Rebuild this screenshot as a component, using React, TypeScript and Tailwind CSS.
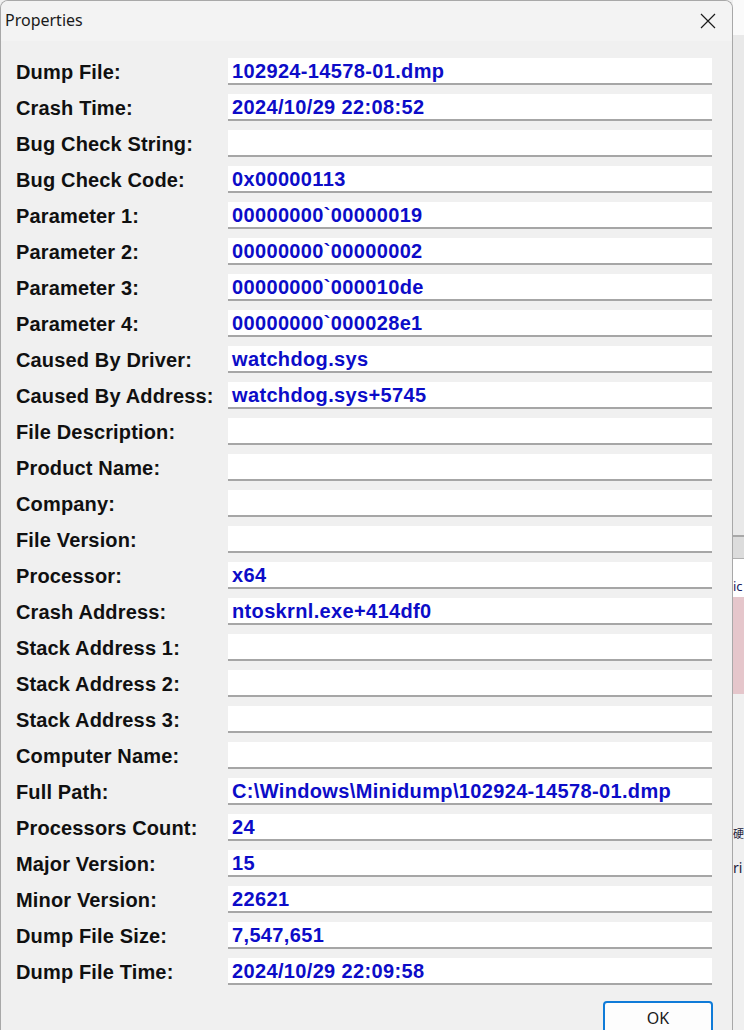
import React from "react";

const rows: [string, string][] = [
  ["Dump File:", "102924-14578-01.dmp"],
  ["Crash Time:", "2024/10/29 22:08:52"],
  ["Bug Check String:", ""],
  ["Bug Check Code:", "0x00000113"],
  ["Parameter 1:", "00000000`00000019"],
  ["Parameter 2:", "00000000`00000002"],
  ["Parameter 3:", "00000000`000010de"],
  ["Parameter 4:", "00000000`000028e1"],
  ["Caused By Driver:", "watchdog.sys"],
  ["Caused By Address:", "watchdog.sys+5745"],
  ["File Description:", ""],
  ["Product Name:", ""],
  ["Company:", ""],
  ["File Version:", ""],
  ["Processor:", "x64"],
  ["Crash Address:", "ntoskrnl.exe+414df0"],
  ["Stack Address 1:", ""],
  ["Stack Address 2:", ""],
  ["Stack Address 3:", ""],
  ["Computer Name:", ""],
  ["Full Path:", "C:\\Windows\\Minidump\\102924-14578-01.dmp"],
  ["Processors Count:", "24"],
  ["Major Version:", "15"],
  ["Minor Version:", "22621"],
  ["Dump File Size:", "7,547,651"],
  ["Dump File Time:", "2024/10/29 22:09:58"],
];

export default function App() {
  return (
    <div className="w-[744px] h-[1030px] flex overflow-hidden bg-[#f0f0f0]">
      {/* Dialog */}
      <div className="w-[733px] h-[1030px] shrink-0 flex flex-col border-t border-l border-r border-[#a8a8a8] rounded-t-[8px] overflow-hidden bg-[#f0f0f0]">
        <div className="h-[40px] shrink-0 flex items-center justify-between bg-[#f3f3f3]">
          <span className="pl-[4px] text-[16px] text-[#1a1a1a] font-['Noto_Sans',sans-serif] leading-none pb-[2px]">
            Properties
          </span>
          <div className="w-[48px] h-[40px] flex items-center justify-center">
            <svg width="16" height="16" viewBox="0 0 16 16">
              <path d="M1 1 L15 15 M15 1 L1 15" stroke="#1a1a1a" strokeWidth="1.2" fill="none" />
            </svg>
          </div>
        </div>
        <div className="flex-1 flex flex-col pt-[17px] font-['Liberation_Sans',Arial,sans-serif] font-bold text-[20px]">
          {rows.map(([label, value]) => (
            <div key={label} className="h-[36px] shrink-0 flex items-start">
              <div className="w-[227px] h-[27px] pl-[15px] flex items-center text-[#101010] whitespace-nowrap tracking-[0.15px]">
                {label}
              </div>
              <div className="w-[484px] h-[27px] bg-white border-b-2 border-[#a6a6a6] pl-[4px] flex items-center text-[#0c0cc8] whitespace-nowrap tracking-[0.35px]">
                {value}
              </div>
            </div>
          ))}
          <div className="flex justify-end pr-[19px] pt-[7px]">
            <button className="w-[110px] h-[34px] rounded-[4px] border-2 border-[#0f7bd8] bg-[#fdfdfd] text-[16px] font-normal text-[#1a1a1a] font-['Noto_Sans',sans-serif] leading-none">
              OK
            </button>
          </div>
        </div>
      </div>
      {/* Background window strip */}
      <div className="flex-1 flex flex-col overflow-hidden font-['Noto_Sans','Noto_Sans_CJK_SC',sans-serif]">
        <div className="h-[35px] shrink-0 bg-[#fafafa]" />
        <div className="h-[500px] shrink-0 bg-[#e9e9e9]" />
        <div className="h-[2px] shrink-0 bg-[#a8a8a8]" />
        <div className="h-[22px] shrink-0 bg-[#dcdcdc] border-b border-[#b0b0b0]" />
        <div className="h-[38px] shrink-0 bg-white flex items-end pb-[2px] whitespace-nowrap">
          <span className="text-[13px] leading-[18px] text-[#202060]">ic</span>
        </div>
        <div className="h-[97px] shrink-0 bg-[#e5c6cb]" />
        <div className="flex-1 bg-[#f0f0f0] flex flex-col whitespace-nowrap">
          <div className="h-[131px] shrink-0" />
          <span className="text-[11px] text-[#1a1a3a] leading-[18px]">硬</span>
          <div className="h-[16px] shrink-0" />
          <span className="text-[14px] text-[#1a1a3a] leading-[18px]">ri</span>
        </div>
      </div>
    </div>
  );
}
